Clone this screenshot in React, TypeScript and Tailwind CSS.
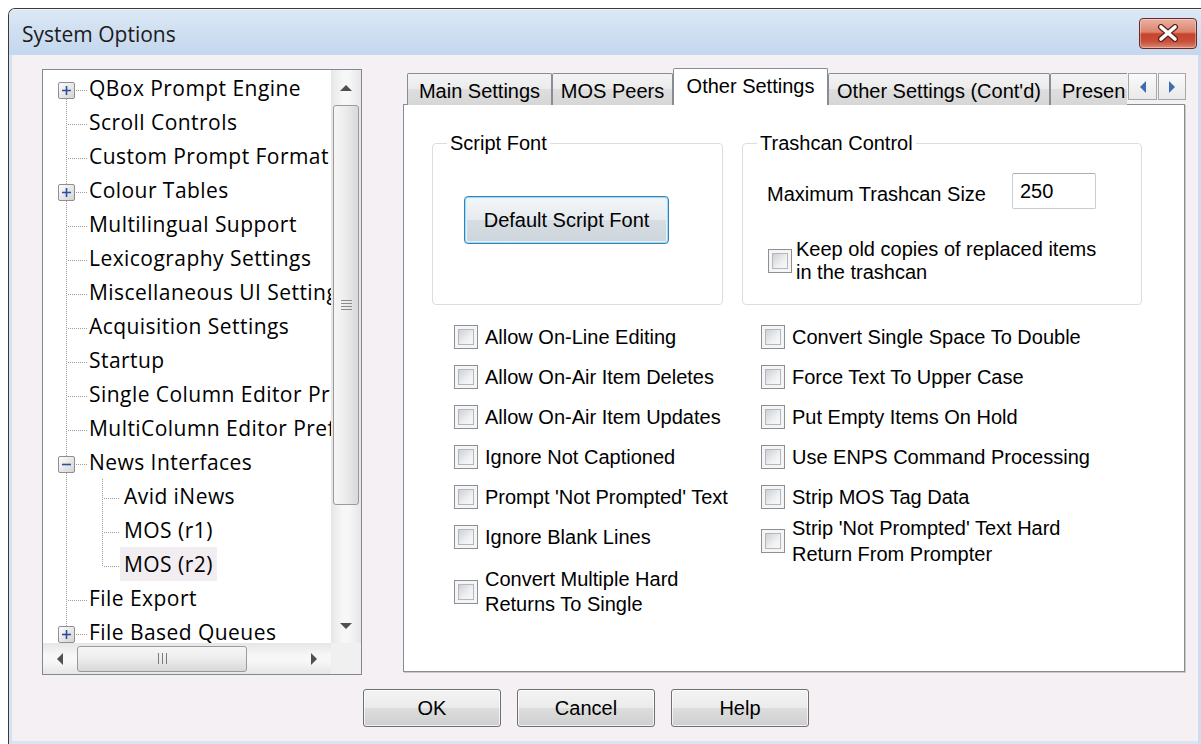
import React from "react";

type TreeItem = {
  label: string;
  level: 0 | 1;
  expander?: "plus" | "minus";
  first?: boolean;
  lastChild?: boolean;
  selected?: boolean;
};

const treeItems: TreeItem[] = [
  { label: "QBox Prompt Engine", level: 0, expander: "plus", first: true },
  { label: "Scroll Controls", level: 0 },
  { label: "Custom Prompt Format", level: 0 },
  { label: "Colour Tables", level: 0, expander: "plus" },
  { label: "Multilingual Support", level: 0 },
  { label: "Lexicography Settings", level: 0 },
  { label: "Miscellaneous UI Settings", level: 0 },
  { label: "Acquisition Settings", level: 0 },
  { label: "Startup", level: 0 },
  { label: "Single Column Editor Preferences", level: 0 },
  { label: "MultiColumn Editor Preferences", level: 0 },
  { label: "News Interfaces", level: 0, expander: "minus" },
  { label: "Avid iNews", level: 1 },
  { label: "MOS (r1)", level: 1 },
  { label: "MOS (r2)", level: 1, lastChild: true, selected: true },
  { label: "File Export", level: 0 },
  { label: "File Based Queues", level: 0, expander: "plus" },
];

const leftChecks = [
  "Allow On-Line Editing",
  "Allow On-Air Item Deletes",
  "Allow On-Air Item Updates",
  "Ignore Not Captioned",
  "Prompt 'Not Prompted' Text",
  "Ignore Blank Lines",
];

const rightChecks = [
  "Convert Single Space To Double",
  "Force Text To Upper Case",
  "Put Empty Items On Hold",
  "Use ENPS Command Processing",
  "Strip MOS Tag Data",
];

const DOT = "#9d9d9d";

function Connector({ item }: { item: TreeItem }) {
  const w = item.level === 0 ? 46 : 77;
  return (
    <svg width={w} height={34} className="shrink-0 block">
      <defs>
        <linearGradient id="expFill" x1="0" y1="0" x2="1" y2="1">
          <stop offset="0" stopColor="#ffffff" />
          <stop offset="1" stopColor="#d2d2d2" />
        </linearGradient>
      </defs>
      <line
        x1={23.5}
        y1={item.first ? 28 : 0}
        x2={23.5}
        y2={34}
        stroke={DOT}
        strokeDasharray="1 1"
      />
      {item.level === 0 && (
        <line
          x1={item.expander ? 33 : 25}
          y1={19.5}
          x2={44}
          y2={19.5}
          stroke={DOT}
          strokeDasharray="1 1"
        />
      )}
      {item.level === 1 && (
        <>
          <line
            x1={59.5}
            y1={0}
            x2={59.5}
            y2={item.lastChild ? 20 : 34}
            stroke={DOT}
            strokeDasharray="1 1"
          />
          <line x1={61} y1={19.5} x2={77} y2={19.5} stroke={DOT} strokeDasharray="1 1" />
        </>
      )}
      {item.expander && (
        <g>
          <rect
            x={15.5}
            y={11.5}
            width={16}
            height={16}
            rx={1.5}
            fill="url(#expFill)"
            stroke="#8f8f8f"
          />
          <path d="M19 19.5 H28" stroke="#2a4f9f" strokeWidth={1.6} />
          {item.expander === "plus" && (
            <path d="M23.5 15 V24" stroke="#2a4f9f" strokeWidth={1.6} />
          )}
        </g>
      )}
    </svg>
  );
}

function Tri({ dir, color = "#505050" }: { dir: "up" | "down" | "left" | "right"; color?: string }) {
  const d = {
    up: "M0 6 L6 0 L12 6 Z",
    down: "M0 0 L12 0 L6 6 Z",
    left: "M6 0 L6 12 L0 6 Z",
    right: "M0 0 L6 6 L0 12 Z",
  }[dir];
  const horiz = dir === "up" || dir === "down";
  return (
    <svg width={horiz ? 12 : 6} height={horiz ? 6 : 12} className="block">
      <path d={d} fill={color} />
    </svg>
  );
}

function Tree() {
  return (
    <div className="ml-[30px] mt-[1px] w-[320px] h-[606px] shrink-0 border border-[#828790] bg-white flex flex-col font-['Open_Sans',sans-serif] text-[21px] tracking-[0.45px] text-black">
      <div className="flex flex-1 min-h-0">
        <div className="flex-1 min-w-0 overflow-hidden pt-[1px]">
          {treeItems.map((item) => (
            <div key={item.label} className="flex h-[34px] items-stretch whitespace-nowrap">
              <Connector item={item} />
              <span
                className={
                  "flex items-center px-[4px] leading-none " +
                  (item.selected ? "bg-[#f2edf1]" : "") +
                  (item.level === 0 ? " -ml-[4px]" : "")
                }
              >
                {item.label}
              </span>
            </div>
          ))}
        </div>
        {/* vertical scrollbar */}
        <div className="w-[30px] shrink-0 flex flex-col items-center bg-[linear-gradient(to_right,#e6e6e6,#f7f7f7_40%,#f7f7f7_60%,#e6e6e6)]">
          <div className="h-[35px] w-full flex items-center justify-center">
            <Tri dir="up" />
          </div>
          <div className="w-[26px] h-[400px] rounded-[3px] border border-[#9a9a9a] bg-[linear-gradient(to_right,#f6f6f6,#ececec_50%,#d8d8d8)] flex flex-col items-center justify-center gap-[2px]">
            <span className="block w-[11px] h-[1px] bg-[#8a8a8a]" />
            <span className="block w-[11px] h-[1px] bg-[#8a8a8a]" />
            <span className="block w-[11px] h-[1px] bg-[#8a8a8a]" />
            <span className="block w-[11px] h-[1px] bg-[#8a8a8a]" />
          </div>
          <div className="flex-1" />
          <div className="h-[34px] w-full flex items-center justify-center">
            <Tri dir="down" />
          </div>
        </div>
      </div>
      {/* horizontal scrollbar */}
      <div className="h-[31px] shrink-0 flex">
        <div className="flex-1 flex items-center bg-[linear-gradient(to_bottom,#e6e6e6,#f7f7f7_40%,#f7f7f7_60%,#e6e6e6)]">
          <div className="w-[34px] h-full flex items-center justify-center">
            <Tri dir="left" />
          </div>
          <div className="w-[170px] h-[26px] rounded-[3px] border border-[#9a9a9a] bg-[linear-gradient(to_bottom,#f6f6f6,#ececec_50%,#d8d8d8)] flex items-center justify-center gap-[3px]">
            <span className="block w-[1px] h-[11px] bg-[#7a7a7a]" />
            <span className="block w-[1px] h-[11px] bg-[#7a7a7a]" />
            <span className="block w-[1px] h-[11px] bg-[#7a7a7a]" />
          </div>
          <div className="flex-1" />
          <div className="w-[34px] h-full flex items-center justify-center">
            <Tri dir="right" />
          </div>
        </div>
        <div className="w-[30px] shrink-0 bg-[#f0f0f0]" />
      </div>
    </div>
  );
}

function CheckBox() {
  return (
    <span className="w-[24px] h-[24px] shrink-0 border border-[#8e8f8f] bg-[#f5f5f5] p-[3px] flex">
      <span className="flex-1 border border-[#b4b8be] bg-[linear-gradient(135deg,#cdd1d6,#eef0f2_60%,#f9f9f9)]" />
    </span>
  );
}

function Tab({ label, w, active }: { label: string; w: string; active?: boolean }) {
  if (active) {
    return (
      <div
        className={
          w +
          " h-[37px] shrink-0 border border-b-0 border-[#898c95] bg-white flex items-center justify-center pb-[3px] rounded-t-[2px]"
        }
      >
        {label}
      </div>
    );
  }
  return (
    <div
      className={
        w +
        " h-[32px] shrink-0 border border-b-0 border-[#898c95] bg-[linear-gradient(to_bottom,#f3f3f3,#ebebeb_50%,#dedede_50%,#d6d6d6)] flex items-center justify-center pt-[3px] whitespace-nowrap overflow-hidden rounded-t-[2px]"
      }
    >
      {label}
    </div>
  );
}

function GroupBox({
  label,
  w,
  children,
}: {
  label: string;
  w: string;
  children: React.ReactNode;
}) {
  return (
    <div className={w + " h-[162px] shrink-0 border border-[#d5dfe5] rounded-[4px]"}>
      <div className="-mt-[12px] ml-[14px] w-fit bg-white px-[3px] leading-[23px]">{label}</div>
      {children}
    </div>
  );
}

function DialogButton({ label }: { label: string }) {
  return (
    <div className="w-[138px] h-[38px] border border-[#707070] rounded-[3px] bg-[linear-gradient(to_bottom,#f3f3f3,#ebebeb_50%,#dddddd_50%,#cfcfcf)] shadow-[inset_0_0_0_1px_rgba(255,255,255,0.7)] flex items-center justify-center">
      {label}
    </div>
  );
}

function TabControl() {
  return (
    <div className="ml-[41px] w-[783px] shrink-0 flex flex-col">
      <div className="relative z-10 -mb-[1px] h-[37px] flex">
        <div className="w-[724px] overflow-hidden flex items-end pl-[4px]">
          <Tab label="Main Settings" w="w-[145px]" />
          <Tab label="MOS Peers" w="w-[121px]" />
          <Tab label="Other Settings" w="w-[155px]" active />
          <Tab label="Other Settings (Cont'd)" w="w-[222px]" />
          <div className="w-[100px] h-[32px] shrink-0 border border-b-0 border-[#898c95] bg-[linear-gradient(to_bottom,#f3f3f3,#ebebeb_50%,#dedede_50%,#d6d6d6)] flex items-center pl-[11px] pt-[3px] whitespace-nowrap rounded-t-[2px]">
            Presen
          </div>
        </div>
        <div className="ml-[1px] pt-[5px] flex gap-[1px]">
          <div className="w-[29px] h-[27px] border border-[#a7a7a7] bg-[linear-gradient(to_bottom,#fafafa,#e9e9e9)] flex items-center justify-center">
            <Tri dir="left" color="#3b6db0" />
          </div>
          <div className="w-[28px] h-[27px] border border-[#a7a7a7] bg-[linear-gradient(to_bottom,#fafafa,#e9e9e9)] flex items-center justify-center">
            <Tri dir="right" color="#3b6db0" />
          </div>
        </div>
      </div>
      <div className="w-[782px] h-[568px] border border-[#898c95] bg-white shadow-[1px_1px_0_#c9c9c9] pt-[38px] pl-[28px]">
        <div className="flex gap-[19px]">
          <GroupBox label="Script Font" w="w-[291px]">
            <div className="mt-[41px] ml-[31px] w-[205px] h-[48px] rounded-[4px] border border-[#3c7fb1] shadow-[inset_0_0_0_1px_#9fdcf7,inset_0_0_0_2px_#def3fc] bg-[linear-gradient(to_bottom,#f3f6f8,#e6ebef_50%,#d6dde3_50%,#cdd5dc)] flex items-center justify-center">
              Default Script Font
            </div>
          </GroupBox>
          <GroupBox label="Trashcan Control" w="w-[400px]">
            <div className="mt-[18px] ml-[24px] flex items-center">
              <span className="w-[245px] pt-[5px]">Maximum Trashcan Size</span>
              <span className="w-[84px] h-[36px] border border-[#c5cdd6] border-t-[#abadb3] rounded-[2px] flex items-center pl-[7px]">
                250
              </span>
            </div>
            <div className="mt-[29px] ml-[25px] flex items-center gap-[4px]">
              <CheckBox />
              <span className="leading-[23px]">
                Keep old copies of replaced items
                <br />
                in the trashcan
              </span>
            </div>
          </GroupBox>
        </div>
        <div className="mt-[12px] ml-[22px] flex">
          <div className="w-[307px] flex flex-col">
            {leftChecks.map((t) => (
              <div key={t} className="h-[40px] flex items-center gap-[7px] whitespace-nowrap">
                <CheckBox />
                <span>{t}</span>
              </div>
            ))}
            <div className="mt-[10px] h-[50px] flex items-center gap-[7px]">
              <CheckBox />
              <span className="leading-[25px]">
                Convert Multiple Hard
                <br />
                Returns To Single
              </span>
            </div>
          </div>
          <div className="flex flex-col">
            {rightChecks.map((t) => (
              <div key={t} className="h-[40px] flex items-center gap-[7px] whitespace-nowrap">
                <CheckBox />
                <span>{t}</span>
              </div>
            ))}
            <div className="h-[48px] flex items-center gap-[7px]">
              <CheckBox />
              <span className="leading-[26px]">
                Strip 'Not Prompted' Text Hard
                <br />
                Return From Prompter
              </span>
            </div>
          </div>
        </div>
      </div>
    </div>
  );
}

export default function App() {
  return (
    <div className="w-[1201px] h-[744px] overflow-hidden bg-white pt-[8px] pl-[8px]">
      <div className="w-[1193px] h-[736px] flex flex-col border-l border-t border-[#3a3a3a] rounded-tl-[7px] overflow-hidden">
        {/* caption bar */}
        <div className="h-[46px] shrink-0 flex items-center justify-between pl-[13px] pr-[4px] border-t border-white/70 bg-[linear-gradient(to_bottom,#dce8f5,#cfdff1_50%,#c4d7ee)]">
          <span className="mt-[4px] font-['Open_Sans',sans-serif] text-[21px] text-[#1b1b1b]">
            System Options
          </span>
          <div className="mt-[1px] w-[58px] h-[31px] rounded-[4px] border border-[#6b2a20] shadow-[inset_0_0_0_1px_rgba(255,255,255,0.35)] bg-[linear-gradient(to_bottom,#eab1a3,#dc8470_45%,#c5432b_52%,#c9503a_78%,#de8a72)] flex items-center justify-center">
            <svg width="22" height="18" viewBox="0 0 22 18">
              <path d="M4 3 L18 15 M18 3 L4 15" stroke="#5a2019" strokeWidth="6" strokeLinecap="round" />
              <path d="M4 3 L18 15 M18 3 L4 15" stroke="#ffffff" strokeWidth="3.6" strokeLinecap="round" />
            </svg>
          </div>
        </div>
        {/* client area */}
        <div className="flex-1 flex min-h-0">
          <div className="w-[3px] shrink-0 bg-[#d5e2f1]" />
          <div className="flex-1 flex flex-col bg-[#f4f0f4] font-['Liberation_Sans',Arial,sans-serif] text-[20px] text-black">
            <div className="flex pt-[13px]">
              <Tree />
              <TabControl />
            </div>
            <div className="mt-[14px] pl-[351px] flex gap-[16px]">
              <DialogButton label="OK" />
              <DialogButton label="Cancel" />
              <DialogButton label="Help" />
            </div>
            <div className="flex-1" />
            <div className="h-[3px] bg-[#dbe4f0]" />
          </div>
          <div className="w-[3px] shrink-0 bg-[#cddcee]" />
        </div>
      </div>
    </div>
  );
}
